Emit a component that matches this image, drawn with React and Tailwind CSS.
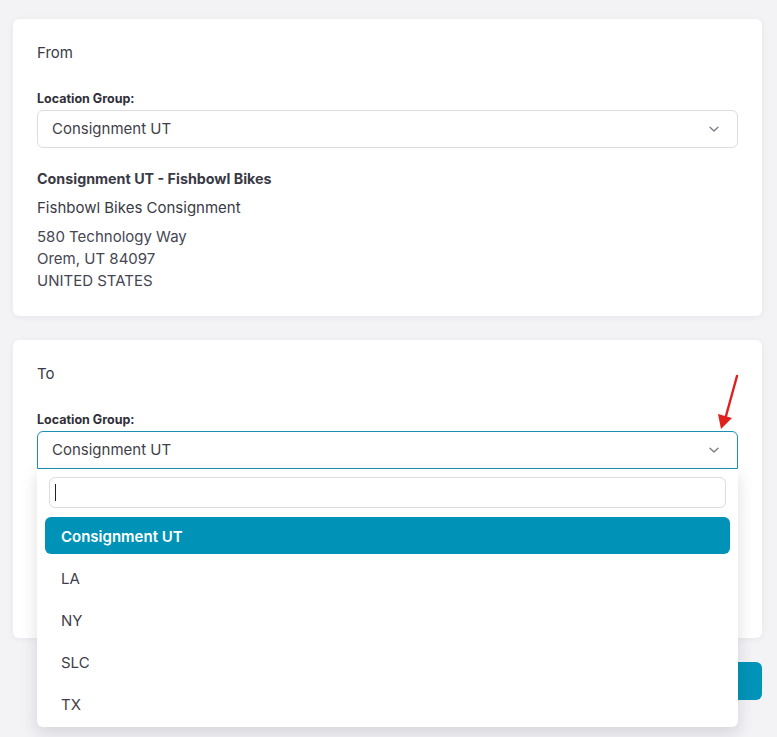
import React from "react";

const font = { fontFamily: "Inter, 'Noto Sans', sans-serif" };

function Chevron() {
  return (
    <svg width="12" height="12" viewBox="0 0 12 12" className="text-[#7a7a86]">
      <path d="M2 4.2 L6 8 L10 4.2" fill="none" stroke="currentColor" strokeWidth="1.3" strokeLinecap="round" strokeLinejoin="round" />
    </svg>
  );
}

function Select({ value, active }) {
  return (
    <div
      className={
        "h-[38px] flex items-center justify-between pl-[14px] pr-[17px] bg-white border " +
        (active ? "border-[#1b8fb3] rounded-t-md" : "border-[#dcdce1] rounded-md")
      }
    >
      <span className="text-[15px] text-[#3f3f4a]">{value}</span>
      <Chevron />
    </div>
  );
}

const options = ["Consignment UT", "LA", "NY", "SLC", "TX"];

export default function App() {
  return (
    <div className="relative min-h-[737px] bg-[#f3f3f6] pl-[13px] pr-[15px] pt-[19px] pb-8" style={font}>
      {/* Source location card */}
      <div className="bg-white rounded-md shadow-[0_1px_6px_rgba(30,30,60,0.06)] px-6 pt-6 pb-6">
        <div className="text-[15px] leading-5 text-[#3a3a45]">From</div>
        <div className="mt-7 text-[12.5px] leading-4 font-bold text-[#2f2f38] mb-[3px]">Location Group:</div>
        <Select value="Consignment UT" />
        <div className="mt-[21px] text-[14.3px] leading-5 font-bold text-[#3a3a45]">Consignment UT - Fishbowl Bikes</div>
        <div className="mt-[9px] text-[15px] leading-5 text-[#3a3a45]">Fishbowl Bikes Consignment</div>
        <div className="mt-[8px] text-[15px] leading-[22px] text-[#464652]">
          <div>580 Technology Way</div>
          <div>Orem, UT 84097</div>
          <div>UNITED STATES</div>
        </div>
      </div>

      {/* Destination location card */}
      <div className="mt-6 bg-white rounded-md shadow-[0_1px_6px_rgba(30,30,60,0.06)] px-6 pt-6 pb-6">
        <div className="text-[15px] leading-5 text-[#3a3a45]">To</div>
        <div className="mt-7 text-[12.5px] leading-4 font-bold text-[#2f2f38] mb-[3px]">Location Group:</div>
        <div className="relative">
          <Select value="Consignment UT" active />
          {/* Open dropdown list */}
          <div className="absolute left-0 right-0 top-full z-10 bg-white rounded-b-md shadow-[0_6px_16px_rgba(20,20,50,0.14)] pt-2 pb-[5px]">
            <div className="mx-3 h-[31px] border border-[#dcdce1] rounded-md flex items-center pl-[5px]">
              <div className="w-px h-[17px] bg-[#222]" />
            </div>
            <div className="mt-[9px] px-2 flex flex-col gap-[5px]">
              {options.map((o, i) => (
                <div
                  key={o}
                  className={
                    "h-[37px] flex items-center px-4 pt-[3px] rounded-md text-[15px] " +
                    (i === 0 ? "bg-[#0093b7] text-white font-semibold" : "text-[#3f3f4a]")
                  }
                >
                  {o}
                </div>
              ))}
            </div>
          </div>
        </div>
        <div className="h-[145px]" />
      </div>

      <div className="mt-6 flex justify-end">
        <button className="h-[38px] px-6 rounded-md bg-[#0094b8] text-white text-[15px] font-semibold">Transfer</button>
      </div>

      {/* Pointer arrow */}
      <svg className="absolute left-[710px] top-[370px] z-20" width="36" height="66" viewBox="0 0 36 66">
        <line x1="27" y1="6" x2="16" y2="46" stroke="#e0201c" strokeWidth="2.4" strokeLinecap="round" />
        <polygon points="8,44 22,48 11,59" fill="#e0201c" />
      </svg>
    </div>
  );
}
